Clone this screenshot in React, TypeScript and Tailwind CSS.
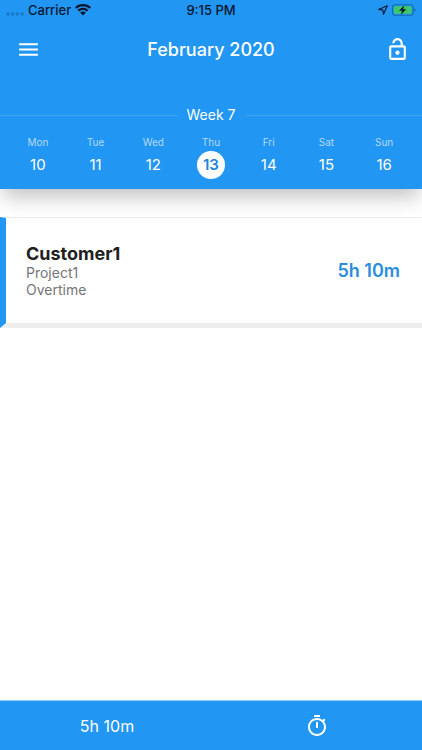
type Day = { name: string; date: number };

const days: Day[] = [
  { name: "Mon", date: 10 },
  { name: "Tue", date: 11 },
  { name: "Wed", date: 12 },
  { name: "Thu", date: 13 },
  { name: "Fri", date: 14 },
  { name: "Sat", date: 15 },
  { name: "Sun", date: 16 },
];

const selectedDate = 13;

function StatusBar() {
  return (
    <div className="grid h-5 grid-cols-3 items-center px-[6px] text-[13px] leading-5 font-medium text-[#06152c]">
      <div className="flex items-center gap-1">
        <svg width="18" height="6" viewBox="0 0 18 6" className="mt-2 fill-[#1c79c9]" aria-hidden="true">
          <circle cx="2" cy="3" r="1.7" />
          <circle cx="6.7" cy="3" r="1.7" />
          <circle cx="11.4" cy="3" r="1.7" />
          <circle cx="16.1" cy="3" r="1.7" />
        </svg>
        <span>Carrier</span>
        <svg width="16" height="12" viewBox="0 0 16 12" className="fill-current" aria-hidden="true">
          <path d="M8 0C4.9 0 2.1 1.2 0 3.2l1.5 1.6C3.2 3.200 5.500 2.300 8 2.300s4.800.9 6.500 2.500L16 3.200C13.900 1.200 11.100 0 8 0z" />
          <path d="M8 3.800c-2.100 0-4 .8-5.400 2.100l1.500 1.600C5.100 6.600 6.500 6 8 6s2.900.6 3.900 1.500l1.500-1.600C12 4.600 10.100 3.800 8 3.800z" />
          <path d="M8 7.500c-1.100 0-2.100.4-2.800 1.100L8 11.600l2.800-3C10.100 7.900 9.100 7.500 8 7.500z" />
        </svg>
      </div>
      <div className="text-center">9:15 PM</div>
      <div className="flex items-center justify-end gap-1">
        <svg width="10" height="10" viewBox="0 0 10 10" fill="none" className="stroke-current" strokeWidth="1.1" strokeLinejoin="round" aria-hidden="true">
          <path d="M9.300.7.7 4.500l4.200.6.600 4.200z" />
        </svg>
        <svg width="24" height="12" viewBox="0 0 25 12" aria-hidden="true">
          <rect x=".6" y=".6" width="21.300" height="10.800" rx="2.600" fill="none" stroke="#1668b0" strokeWidth="1.100" />
          <rect x="2" y="2" width="18.500" height="8" rx="1.400" fill="#3cc76a" />
          <path d="M23.200 4v4c.8-.3 1.300-1.100 1.300-2s-.5-1.700-1.300-2z" fill="#1668b0" />
          <path d="M12.800 1 7.300 6.700h3.200L9.300 11l5.500-5.800h-3.200z" fill="#06152c" />
        </svg>
      </div>
    </div>
  );
}

function Toolbar() {
  return (
    <div className="flex h-[58px] items-center justify-between px-3 text-white">
      <button type="button" aria-label="Menu" className="flex size-8 items-center justify-center">
        <svg width="25" height="25" viewBox="0 0 24 24" fill="currentColor" aria-hidden="true">
          <path d="M3 18h18v-2H3v2zm0-5h18v-2H3v2zm0-7v2h18V6H3z" />
        </svg>
      </button>
      <h1 className="pt-[2px] text-lg font-medium">February 2020</h1>
      <button type="button" aria-label="Unlock" className="flex size-8 items-center justify-end">
        <svg width="25" height="25" viewBox="0 0 24 24" fill="currentColor" aria-hidden="true">
          <path d="M18 8h-1V6c0-2.760-2.240-5-5-5S7 3.240 7 6h2c0-1.660 1.340-3 3-3s3 1.340 3 3v2H6c-1.100 0-2 .9-2 2v10c0 1.100.9 2 2 2h12c1.100 0 2-.9 2-2V10c0-1.100-.9-2-2-2zm0 12H6V10h12v10zm-6-3c1.100 0 2-.9 2-2s-.9-2-2-2-2 .9-2 2 .9 2 2 2z" />
        </svg>
      </button>
    </div>
  );
}

function WeekStrip() {
  return (
    <section className="pt-[26px] pb-[10px]">
      <div className="flex items-center gap-[10px] text-sm leading-[22px] text-white">
        <div className="h-px flex-1 bg-[#42a3f3]" />
        <h2>Week 7</h2>
        <div className="h-px flex-1 bg-[#42a3f3]" />
      </div>
      <div className="grid grid-cols-7 px-[9px] pt-2">
        {days.map((day) => (
          <button key={day.date} type="button" className="flex flex-col items-center gap-px">
            <span className="text-[10px] leading-4 text-[#b5dafa]">{day.name}</span>
            <span
              className={
                day.date === selectedDate
                  ? "flex size-7 items-center justify-center rounded-full bg-white text-[15px] font-semibold text-[#2184d8]"
                  : "flex size-7 items-center justify-center text-[15px] text-white"
              }
            >
              {day.date}
            </span>
          </button>
        ))}
      </div>
    </section>
  );
}

export default function App() {
  return (
    <div className="flex min-h-screen flex-col bg-white font-['Inter','Liberation_Sans',sans-serif]">
      <header className="bg-[#2196f3] shadow-[0_10px_20px_-3px_rgba(0,0,0,0.26)]">
        <StatusBar />
        <Toolbar />
        <WeekStrip />
      </header>
      <main className="flex-1 pt-7">
        <article className="flex items-center justify-between border-t border-b-[5px] border-l-[6px] border-t-[#eeeeee] border-b-[#eeeeee] border-l-[#2196f3] pt-[26px] pr-[22px] pb-[25px] pl-5">
          <div className="text-sm leading-[17px] text-[#757575]">
            <h3 className="text-lg leading-5 font-bold text-[#212121]">Customer1</h3>
            <p>Project1</p>
            <p>Overtime</p>
          </div>
          <p className="text-lg font-semibold text-[#2b8cde]">5h 10m</p>
        </article>
      </main>
      <footer className="grid h-[50px] grid-cols-2 items-center border-t border-[#90caf9] bg-[#2196f3] pl-[2px] text-white">
        <p className="text-center text-base">5h 10m</p>
        <button type="button" aria-label="Start timer" className="flex h-full items-center justify-center">
          <svg width="24" height="24" viewBox="0 0 24 24" fill="currentColor" aria-hidden="true">
            <path d="M15 1H9v2h6V1zm-4 13h2V8h-2v6zm8.030-6.610 1.420-1.420c-.43-.51-.9-.99-1.410-1.410l-1.420 1.420C16.070 4.740 14.120 4 12 4c-4.970 0-9 4.030-9 9s4.020 9 9 9 9-4.030 9-9c0-2.120-.74-4.070-1.970-5.610zM12 20c-3.870 0-7-3.130-7-7s3.130-7 7-7 7 3.130 7 7-3.130 7-7 7z" />
          </svg>
        </button>
      </footer>
    </div>
  );
}
